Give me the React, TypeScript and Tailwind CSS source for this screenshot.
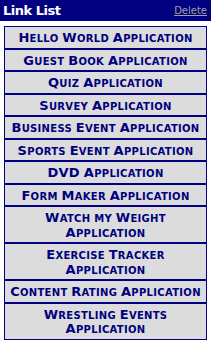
const LINKS = [
  ['Hello World Application'],
  ['Guest Book Application'],
  ['Quiz Application'],
  ['Survey Application'],
  ['Business Event Application'],
  ['Sports Event Application'],
  ['DVD Application'],
  ['Form Maker Application'],
  ['Watch my Weight', 'Application'],
  ['Exercise Tracker', 'Application'],
  ['Content Rating Application'],
  ['Wrestling Events', 'Application'],
];

// small caps by hand: capitals stay full size, the rest is set smaller
function SmallCaps({ text }: { text: string }) {
  const parts: { big: boolean; s: string }[] = [];
  for (const ch of text) {
    const big = ch !== ' ' && ch === ch.toUpperCase();
    const last = parts[parts.length - 1];
    if (last && last.big === big) last.s += ch;
    else parts.push({ big, s: ch });
  }
  return (
    <>
      {parts.map((p, i) =>
        p.big ? (
          <span key={i} className="text-[13px]">{p.s}</span>
        ) : (
          <span key={i} className="text-[10px] uppercase">{p.s}</span>
        )
      )}
    </>
  );
}

export default function App() {
  return (
    <div className="w-[211px] h-[340px] bg-white overflow-hidden font-['DejaVu_Sans',Verdana,sans-serif]">
      {/* header bar */}
      <div className="h-[21px] bg-[#000080] flex items-center justify-between pl-[3px] pr-[4px]">
        <span className="text-white font-bold text-[13px] tracking-[-0.5px] leading-none">Link List</span>
        <a href="#" className="text-[#a0a0a0] text-[10px] underline leading-none">Delete</a>
      </div>

      {/* link list */}
      <div className="mx-[4px] mt-[5px]">
        {LINKS.map((lines, i) => (
          <div
            key={i}
            className="border border-[#000080] bg-[#dcdcdc] text-[#000080] font-bold leading-[14.5px] tracking-[0.3px] text-center py-[3px] whitespace-nowrap"
          >
            {lines.map((l, j) => (
              <div key={j} className="h-[14.5px]">
                <SmallCaps text={l} />
              </div>
            ))}
          </div>
        ))}
      </div>
    </div>
  );
}
